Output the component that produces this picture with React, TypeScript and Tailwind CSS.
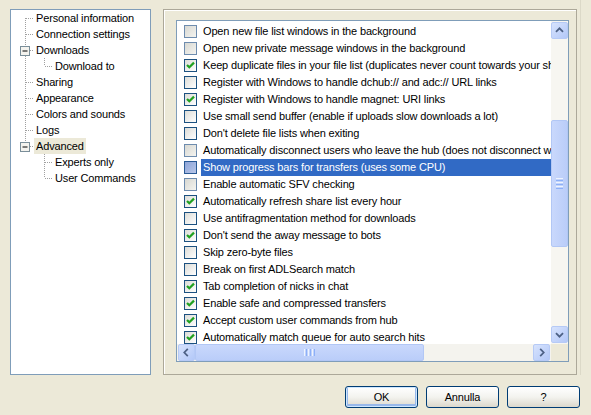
import React from "react";

type Item = { label: string; state: "off" | "on" | "gray" | "sel" };

const items: Item[] = [
  { label: "Open new file list windows in the background", state: "gray" },
  { label: "Open new private message windows in the background", state: "gray" },
  { label: "Keep duplicate files in your file list (duplicates never count towards your share)", state: "on" },
  { label: "Register with Windows to handle dchub:// and adc:// URL links", state: "off" },
  { label: "Register with Windows to handle magnet: URI links", state: "on" },
  { label: "Use small send buffer (enable if uploads slow downloads a lot)", state: "off" },
  { label: "Don't delete file lists when exiting", state: "off" },
  { label: "Automatically disconnect users who leave the hub (does not disconnect when the user is an operator)", state: "gray" },
  { label: "Show progress bars for transfers (uses some CPU)", state: "sel" },
  { label: "Enable automatic SFV checking", state: "gray" },
  { label: "Automatically refresh share list every hour", state: "on" },
  { label: "Use antifragmentation method for downloads", state: "off" },
  { label: "Don't send the away message to bots", state: "on" },
  { label: "Skip zero-byte files", state: "off" },
  { label: "Break on first ADLSearch match", state: "off" },
  { label: "Tab completion of nicks in chat", state: "on" },
  { label: "Enable safe and compressed transfers", state: "on" },
  { label: "Accept custom user commands from hub", state: "on" },
  { label: "Automatically match queue for auto search hits", state: "on" },
];

function Check({ state }: { state: Item["state"] }) {
  const bg =
    state === "gray"
      ? "bg-gradient-to-br from-[#D8D8D2] to-[#F4F4F0] border-[#6E8CAE]"
      : state === "sel"
      ? "bg-gradient-to-br from-[#8FA5D8] to-[#B8C7E8] border-[#2A5A95]"
      : "bg-gradient-to-br from-[#DCDCD7] to-[#FFFFFF] border-[#1C5180]";
  return (
    <div className={`ml-[7px] w-[13px] h-[13px] flex-none border ${bg} flex items-center justify-center`}>
      {state === "on" && (
        <svg width="11" height="11" viewBox="0 0 11 11">
          <path d="M2 5 L4.3 7.3 L9 2.6" stroke="#21A121" strokeWidth="2.2" fill="none" />
        </svg>
      )}
    </div>
  );
}

function Arrow({ dir }: { dir: "up" | "down" | "left" | "right" }) {
  const d =
    dir === "up"
      ? "M4.5 10 L8.5 6 L12.5 10"
      : dir === "down"
      ? "M4.5 7 L8.5 11 L12.5 7"
      : dir === "left"
      ? "M10 4.5 L6 8.5 L10 12.5"
      : "M7 4.5 L11 8.5 L7 12.5";
  return (
    <div className="w-[17px] h-[17px] flex-none rounded-[2px] border border-[#B6CAF6] bg-gradient-to-br from-[#D7E3FD] to-[#B3C8F8] flex items-center justify-center">
      <svg width="17" height="17" viewBox="0 0 17 17">
        <path d={d} stroke="#4D6185" strokeWidth="2" fill="none" />
      </svg>
    </div>
  );
}

type TreeNode = { label: string; level: 0 | 1; box?: boolean; last?: boolean; parentCont?: boolean; selected?: boolean; first?: boolean };

const tree: TreeNode[] = [
  { label: "Personal information", level: 0, first: true },
  { label: "Connection settings", level: 0 },
  { label: "Downloads", level: 0, box: true },
  { label: "Download to", level: 1, last: true, parentCont: true },
  { label: "Sharing", level: 0 },
  { label: "Appearance", level: 0 },
  { label: "Colors and sounds", level: 0 },
  { label: "Logs", level: 0 },
  { label: "Advanced", level: 0, box: true, last: true, selected: true },
  { label: "Experts only", level: 1, parentCont: false },
  { label: "User Commands", level: 1, last: true, parentCont: false },
];

function TreeLines({ n }: { n: TreeNode }) {
  const dot = { stroke: "#A0A0A0", strokeDasharray: "1 1", shapeRendering: "crispEdges" as const };
  if (n.level === 0) {
    return (
      <svg width="23" height="16" className="flex-none">
        <line x1="14.5" y1={n.first ? 8 : 0} x2="14.5" y2={n.last ? 8 : 16} style={dot} />
        <line x1="15" y1="8.5" x2="23" y2="8.5" style={dot} />
        {n.box && (
          <g>
            <rect x="9.5" y="4.5" width="9" height="9" fill="#F4F3EE" stroke="#7A8E99" />
            <line x1="11.5" y1="9" x2="16.5" y2="9" stroke="#000" />
          </g>
        )}
      </svg>
    );
  }
  return (
    <svg width="42" height="16" className="flex-none">
      {n.parentCont && <line x1="14.5" y1="0" x2="14.5" y2="16" style={dot} />}
      <line x1="33.5" y1="0" x2="33.5" y2={n.last ? 8 : 16} style={dot} />
      <line x1="34" y1="8.5" x2="42" y2="8.5" style={dot} />
    </svg>
  );
}

export default function App() {
  return (
    <div
      className="w-[591px] h-[415px] bg-[#ECE9D8] text-[11px] tracking-[-0.15px] text-black flex flex-col overflow-hidden"
      style={{ fontFamily: '"Liberation Sans", Arial, sans-serif' }}
    >
      <div className="flex pt-[9px] pl-[10px]">
        {/* Tree */}
        <div className="w-[141px] h-[366px] border border-[#7F9DB9] bg-white flex flex-col">
          {tree.map((n, i) => (
            <div key={i} className="flex items-center h-[16px]">
              <TreeLines n={n} />
              <span
                className={`px-[2px] leading-[16px] whitespace-nowrap ${n.selected ? "bg-[#ECE9D8]" : ""}`}
              >
                {n.label}
              </span>
            </div>
          ))}
        </div>

        {/* Frame */}
        <div className="ml-[12px] w-[414px] h-[366px] border border-[#ACA899] shadow-[inset_1px_1px_0_#FFFFFF] pl-[12px] pt-[10px]">
          <div className="w-[393px] h-[342px] border border-[#7F9DB9] bg-white grid grid-cols-[374px_17px] grid-rows-[323px_17px]">
            <div className="overflow-hidden pt-[2px]">
              {items.map((it, i) => (
                <div key={i} className="flex items-center h-[17px] whitespace-nowrap">
                  <Check state={it.state} />
                  <span
                    className={`ml-[4px] px-[2px] leading-[17px] flex-none ${
                      it.state === "sel" ? "bg-[#316AC5] text-white pr-[200px]" : ""
                    }`}
                  >
                    {it.label}
                  </span>
                </div>
              ))}
            </div>
            {/* vertical scrollbar */}
            <div className="bg-[#F7F6F1] flex flex-col pt-[1px] pb-[1px]">
              <Arrow dir="up" />
              <div className="flex-1 flex flex-col">
                <div className="h-[81px]" />
                <div className="h-[127px] rounded-[2px] border border-[#B2C7F5] bg-gradient-to-r from-[#C9D8FC] to-[#BACDF9] flex flex-col items-center justify-center gap-[1px]">
                  <div className="w-[7px] h-[1px] bg-[#EEF4FE]" />
                  <div className="w-[7px] h-[1px] bg-[#8CB0F8]" />
                  <div className="w-[7px] h-[1px] bg-[#EEF4FE]" />
                  <div className="w-[7px] h-[1px] bg-[#8CB0F8]" />
                  <div className="w-[7px] h-[1px] bg-[#EEF4FE]" />
                  <div className="w-[7px] h-[1px] bg-[#8CB0F8]" />
                </div>
              </div>
              <Arrow dir="down" />
            </div>
            {/* horizontal scrollbar */}
            <div className="bg-[#F4F3EE] flex pl-[1px] pr-[1px]">
              <Arrow dir="left" />
              <div className="w-[229px] rounded-[2px] border border-[#B2C7F5] bg-gradient-to-b from-[#C9D8FC] to-[#BACDF9] flex items-center justify-center gap-[1px]">
                <div className="w-[1px] h-[7px] bg-[#EEF4FE]" />
                <div className="w-[1px] h-[7px] bg-[#8CB0F8]" />
                <div className="w-[1px] h-[7px] bg-[#EEF4FE]" />
                <div className="w-[1px] h-[7px] bg-[#8CB0F8]" />
                <div className="w-[1px] h-[7px] bg-[#EEF4FE]" />
                <div className="w-[1px] h-[7px] bg-[#8CB0F8]" />
              </div>
              <div className="flex-1" />
              <Arrow dir="right" />
            </div>
            <div className="bg-[#ECE9D8]" />
          </div>
        </div>
        <div className="ml-[3px] w-[1px] h-[375px] -mt-[9px] bg-[#DCD9C8]" />
      </div>

      {/* Buttons */}
      <div className="flex justify-end gap-[8px] pr-[11px] mt-[11px]">
        {["OK", "Annulla", "?"].map((b, i) => (
          <div
            key={b}
            className={`w-[73px] h-[22px] rounded-[3px] border border-[#003C74] bg-gradient-to-b from-[#FFFFFF] via-[#F3F3EF] to-[#DCD8CC] flex items-center justify-center ${
              i === 0 ? "shadow-[inset_0_0_0_1px_#CEE7FF,inset_0_-1px_0_2px_#98B8EA]" : ""
            }`}
          >
            {b}
          </div>
        ))}
      </div>
    </div>
  );
}
